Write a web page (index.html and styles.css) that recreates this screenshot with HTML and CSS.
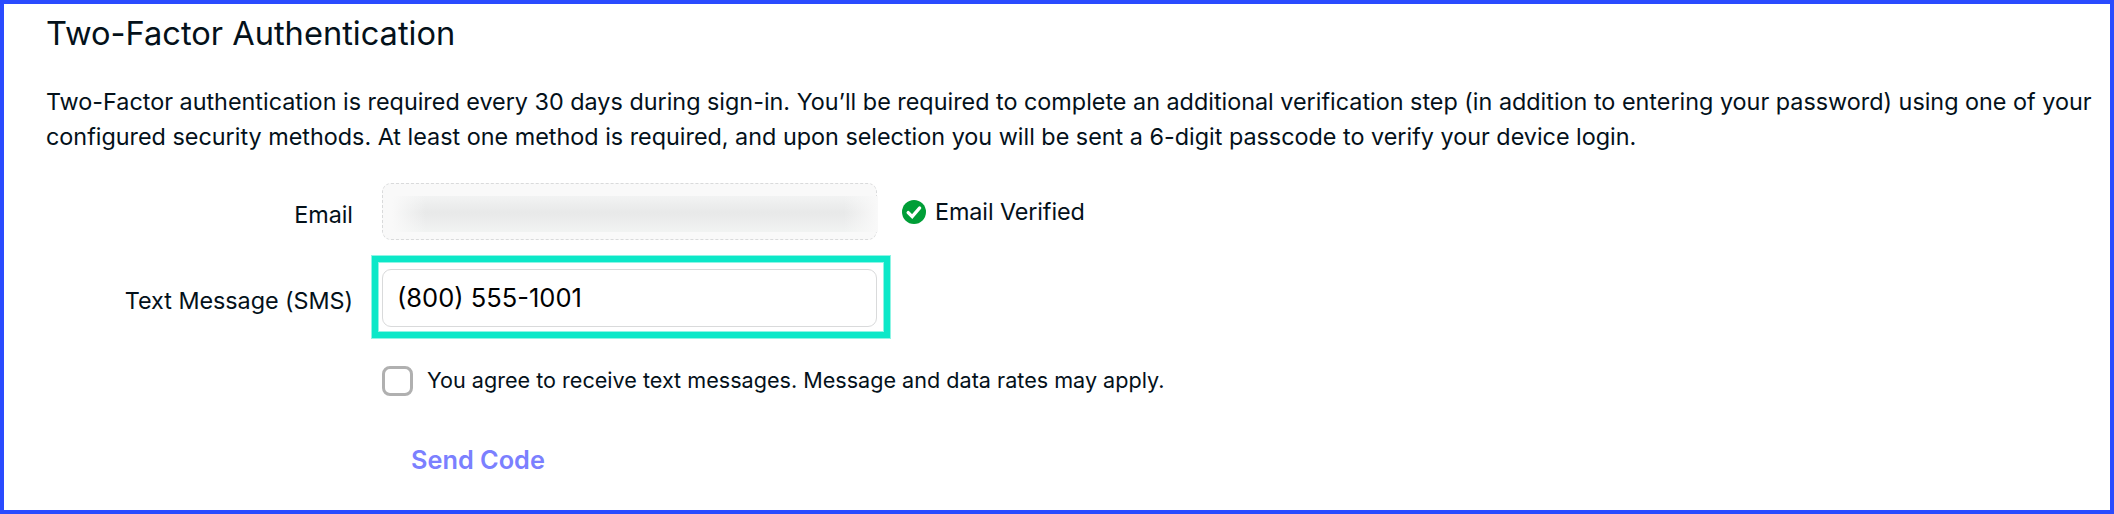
FILE: index.html
```
<!DOCTYPE html>
<html lang="en">
<head>
    <meta charset="UTF-8">
    <meta name="viewport" content="width=device-width, initial-scale=1.0">
    <title>Two-Factor Authentication</title>
    <link rel="stylesheet" href="styles.css">
</head>
<body>
    <form class="two-factor">
        <h2>Two-Factor Authentication</h2>
        <p class="intro">Two-Factor authentication is required every 30 days during sign-in. You’ll be required to complete an additional verification step (in addition to entering your password) using one of your configured security methods. At least one method is required, and upon selection you will be sent a 6-digit passcode to verify your device login.</p>

        <div class="row">
            <div class="label">Email</div>
            <div class="field field-disabled">
                <div class="redacted"></div>
            </div>
            <div class="status">
                <svg width="24" height="24" viewBox="0 0 24 24">
                    <circle cx="12" cy="12" r="12" fill="#009e37"/>
                    <path d="M6.2 12.6l4 4L17.6 8" fill="none" stroke="#fff" stroke-width="3.4" stroke-linecap="round"/>
                </svg>
                <span>Email Verified</span>
            </div>
        </div>

        <div class="row row-sms">
            <label class="label" for="sms">Text Message (SMS)</label>
            <div class="sms-wrap">
                <input class="field" type="text" id="sms" name="sms" value="(800) 555-1001">
                <div class="highlight"></div>
            </div>
        </div>

        <div class="agree">
            <input type="checkbox" id="agree" name="agree">
            <label for="agree">You agree to receive text messages. Message and data rates may apply.</label>
        </div>

        <button class="send" type="button">Send Code</button>
    </form>
</body>
</html>
```
FILE: styles.css
```
body {
    margin: 0;
    font-family: Inter, "Liberation Sans", sans-serif;
    font-size: 23.36px;
    line-height: 35px;
    color: #04111a;
    background-color: white;
}
.two-factor {
    box-sizing: border-box;
    height: 514px;
    padding: 9px 16px 0 42px;
    border: 4px solid #2a4bff;
    overflow: hidden;
}
h2 {
    margin: 0;
    font-size: 32.6px;
    font-weight: 400;
    line-height: 40px;
}
.intro {
    margin: 31px 0 29px;
}
.row {
    display: flex;
    align-items: center;
}
.row-sms {
    margin-top: 29px;
}
.label {
    width: 307px;
    margin-right: 29px;
    padding-top: 5px;
    text-align: right;
    letter-spacing: -0.04px;
}
.field {
    display: block;
    box-sizing: border-box;
    width: 495px;
    height: 58px;
    margin: 0;
    padding: 0 14px 2px;
    border: 1px solid #d9dadb;
    border-radius: 9px;
    background-color: white;
    color: #000;
    font-family: inherit;
    font-size: 25.5px;
}
.field-disabled {
    height: 57px;
    padding: 12px 0 0 9px;
    border-style: dashed;
    background-color: #f9f9f9;
}
/* blurred address, runs just over the right border */
.redacted {
    width: 486px;
    height: 36px;
    background:
        linear-gradient(to right, #f9f9f9, rgba(249, 249, 249, 0) 7%, rgba(249, 249, 249, 0) 93%, #f9f9f9),
        linear-gradient(to bottom, #f2f3f3, #e8e9e9 45%, #eaebeb 60%, #f1f3f2);
}
.status {
    display: flex;
    align-items: center;
    gap: 9px;
    margin-left: 25px;
    letter-spacing: -0.1px;
}
.sms-wrap {
    position: relative;
}
.highlight {
    position: absolute;
    top: -13px;
    right: -13px;
    bottom: -11px;
    left: -10px;
    border: 6px solid #0ce8c8;
    box-shadow: 0 0 0 1px #8ff5e5, inset 0 0 0 1px #8ff5e5;
    pointer-events: none;
}
.agree {
    display: flex;
    align-items: center;
    gap: 14px;
    margin: 39px 0 0 336px;
    height: 30px;
    font-size: 21.6px;
}
.agree label {
    padding-bottom: 1px;
}
.agree input {
    appearance: none;
    box-sizing: border-box;
    width: 31px;
    height: 30px;
    margin: 0;
    border: 3px solid #b0b0b0;
    border-radius: 8px;
}
.send {
    display: block;
    margin: 46px 0 0 365px;
    padding: 0;
    border: none;
    background: none;
    color: #7b80ff;
    font-family: inherit;
    font-size: 25.3px;
    font-weight: 600;
    line-height: 36px;
    cursor: pointer;
}
```
